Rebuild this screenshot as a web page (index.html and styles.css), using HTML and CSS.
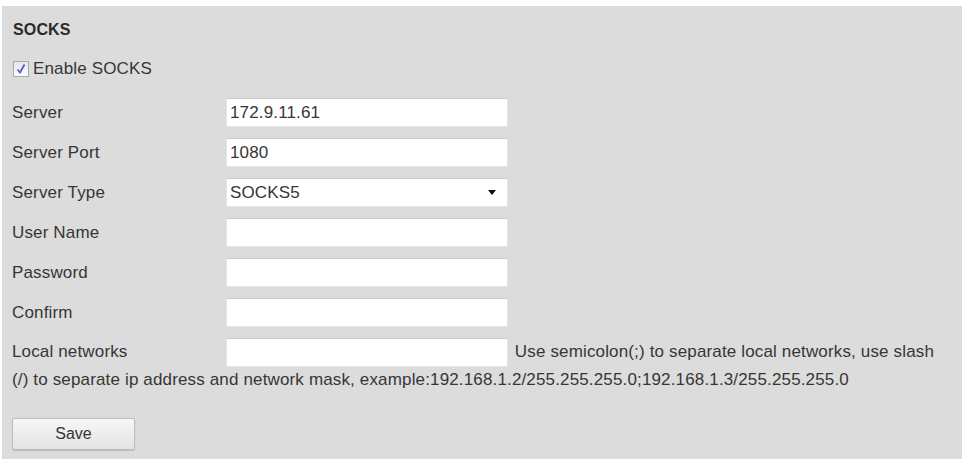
FILE: index.html
```html
<!DOCTYPE html>
<html lang="en">
<head>
    <meta charset="UTF-8">
    <meta name="viewport" content="width=device-width, initial-scale=1.0">
    <title>SOCKS</title>
    <link rel="stylesheet" href="styles.css">
</head>
<body>
    <div class="panel">
        <h2 class="title">SOCKS</h2>
        <label class="check-row">
            <span class="checkbox">
                <svg width="12" height="12" viewBox="0 0 12 12">
                    <path d="M2.5 6.5 L5 9.5 L9.5 1.5" fill="none" stroke="#5a5ac8" stroke-width="1.8"/>
                </svg>
            </span>
            <span>Enable SOCKS</span>
        </label>

        <div class="row">
            <span class="label">Server</span>
            <input class="field" type="text" value="172.9.11.61">
        </div>
        <div class="row">
            <span class="label">Server Port</span>
            <input class="field" type="text" value="1080">
        </div>
        <div class="row">
            <span class="label">Server Type</span>
            <div class="field select">
                <span>SOCKS5</span>
                <span class="caret"></span>
            </div>
        </div>
        <div class="row">
            <span class="label">User Name</span>
            <input class="field" type="text">
        </div>
        <div class="row">
            <span class="label">Password</span>
            <input class="field" type="password">
        </div>
        <div class="row">
            <span class="label">Confirm</span>
            <input class="field" type="password">
        </div>
        <div class="row-flow">
            <span class="label">Local networks</span><input class="field" type="text"> Use semicolon(;) to separate local networks, use slash (/) to separate ip address and network mask, example:192.168.1.2/255.255.255.0;192.168.1.3/255.255.255.0
        </div>

        <button class="save">Save</button>
    </div>
</body>
</html>
```

FILE: styles.css
```css
body {
    margin: 0;
    padding: 6px 2px 3px 2px;
    background-color: #ffffff;
    font-family: "Liberation Sans", Arial, sans-serif;
    font-size: 17px;
    letter-spacing: 0.15px;
    color: #363636;
}

.panel {
    background-color: #dcdcdc;
    padding: 14px 20px 9px 10px;
    height: 453px;
    box-sizing: border-box;
}

.title {
    margin: 0 0 19px 1px;
    height: 20px;
    line-height: 20px;
    font-size: 16px;
    font-weight: bold;
    color: #2a2a2a;
}

.check-row {
    display: flex;
    align-items: center;
    gap: 4px;
    height: 20px;
    margin-bottom: 19px;
}

.checkbox {
    display: flex;
    align-items: center;
    justify-content: center;
    width: 16px;
    height: 16px;
    box-sizing: border-box;
    border: 1px solid #a8a8a8;
    background: linear-gradient(#e6e6ee, #fbfbff);
    margin-left: 1px;
}

.row {
    display: flex;
    align-items: center;
    margin-bottom: 11px;
}

.label {
    display: inline-block;
    width: 214px;
}

.field {
    width: 282px;
    height: 29px;
    box-sizing: border-box;
    border: 1px solid #e4e4e4;
    border-top-color: #c8c8c8;
    background-color: #ffffff;
    padding: 0 3px;
    font-family: inherit;
    font-size: 17px;
    letter-spacing: 0.15px;
    color: #363636;
    outline: none;
}

.select {
    display: flex;
    align-items: center;
    justify-content: space-between;
    padding-right: 11px;
}

.caret {
    width: 0;
    height: 0;
    border-left: 4px solid transparent;
    border-right: 4px solid transparent;
    border-top: 5px solid #111111;
}

.row-flow {
    line-height: 26px;
}

.row-flow .field {
    vertical-align: middle;
    margin-right: 2px;
}

.save {
    margin-top: 25px;
    width: 123px;
    height: 32px;
    border: 1px solid #bdbdbd;
    border-radius: 2px;
    background: linear-gradient(#f7f7f7, #e3e3e3);
    font-family: inherit;
    font-size: 16px;
    color: #333333;
    box-shadow: 0 1px 1px rgba(0, 0, 0, 0.15);
}
```
